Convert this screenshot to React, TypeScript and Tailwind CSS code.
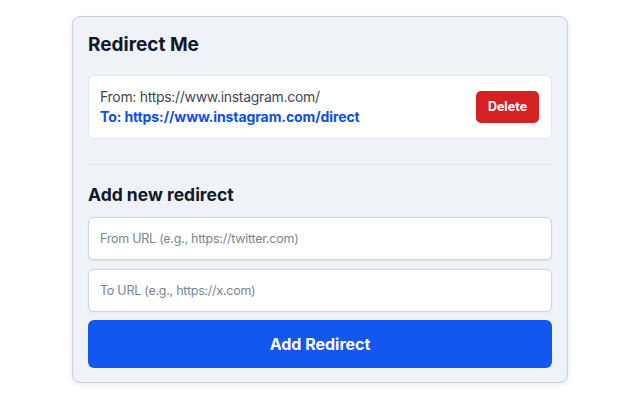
import { useState } from 'react'

interface Redirect {
  from: string
  to: string
}

export default function App() {
  const [redirects, setRedirects] = useState<Redirect[]>([
    { from: 'https://www.instagram.com/', to: 'https://www.instagram.com/direct' },
  ])
  const [from, setFrom] = useState('')
  const [to, setTo] = useState('')

  const add = () => {
    if (!from || !to) return
    setRedirects([...redirects, { from, to }])
    setFrom('')
    setTo('')
  }

  return (
    <div className="flex h-[400px] w-full items-start justify-center bg-white pt-4 font-['Inter',sans-serif]">
      <div className="w-[496px] rounded-lg border border-[#c9ced8] bg-[#eff2f7] px-[15px] pb-[14px] pt-[15px] shadow-[0_2px_6px_rgba(0,0,0,0.08)]">
        <h1 className="mb-[17px] text-[19px] font-bold leading-[26px] text-[#111827]">Redirect Me</h1>

        <ul className="flex flex-col gap-2">
          {redirects.map((r, i) => (
            <li
              className="flex items-center justify-between rounded-md border border-[#e2e6ec] bg-white py-[11px] pl-[11px] pr-3"
              key={i}
            >
              <div className="min-w-0 text-[14px] leading-5">
                <div className="tracking-[-0.3px] text-[#3f4754]">From: {r.from}</div>
                <div className="font-bold tracking-[-0.1px] text-[#0e4fe3]">To: {r.to}</div>
              </div>
              <button
                className="h-8 w-[63px] rounded-[5px] bg-[#d52121] text-[12.5px] font-bold text-white"
                onClick={() => setRedirects(redirects.filter((_, j) => j !== i))}
              >
                Delete
              </button>
            </li>
          ))}
        </ul>

        <hr className="mb-[17px] mt-[25px] border-t border-[#dfe3ea]" />

        <h2 className="mb-[9px] text-[17.5px] font-bold leading-[26px] text-[#111827]">Add new redirect</h2>

        <input
          className="mb-[9px] h-[43px] w-full rounded-md border border-[#cfd4dc] bg-white px-[11px] text-[12.5px] tracking-[-0.25px] text-[#111827] shadow-[0_1px_2px_rgba(0,0,0,0.06)] outline-none placeholder:text-[#7b8494]"
          onChange={e => setFrom(e.target.value)}
          placeholder="From URL (e.g., https://twitter.com)"
          value={from}
        />
        <input
          className="mb-2 h-[43px] w-full rounded-md border border-[#cfd4dc] bg-white px-[11px] text-[12.5px] tracking-[-0.25px] text-[#111827] shadow-[0_1px_2px_rgba(0,0,0,0.06)] outline-none placeholder:text-[#7b8494]"
          onChange={e => setTo(e.target.value)}
          placeholder="To URL (e.g., https://x.com)"
          value={to}
        />
        <button
          className="block h-12 w-full rounded-md bg-[#1157f0] text-[16px] font-bold text-white"
          onClick={add}
        >
          Add Redirect
        </button>
      </div>
    </div>
  )
}
